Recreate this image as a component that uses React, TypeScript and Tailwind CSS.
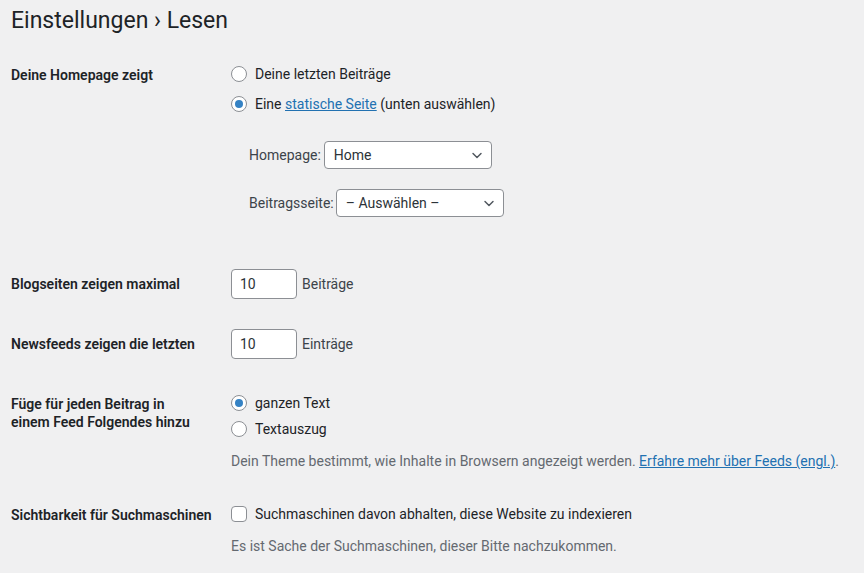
import React from 'react';

const font = { fontFamily: 'Roboto, "Noto Sans", sans-serif' };

function Radio({ checked }: { checked?: boolean }) {
  return (
    <span className="flex h-4 w-4 shrink-0 items-center justify-center rounded-full border border-[#8c8f94] bg-white">
      {checked && <span className="h-2 w-2 rounded-full bg-[#3582c4]" />}
    </span>
  );
}

function Chevron() {
  return (
    <svg width="16" height="16" viewBox="0 0 20 20" className="shrink-0">
      <path d="M5 8l5 5 5-5" fill="none" stroke="#50575e" strokeWidth="1.8" strokeLinecap="round" strokeLinejoin="round" />
    </svg>
  );
}

function Select({ value }: { value: string }) {
  return (
    <div className="flex h-[28px] w-[168px] items-center justify-between rounded-[4px] border border-[#8c8f94] bg-white pl-[9px] pr-[6px] text-[#2c3338]">
      <span className="pt-px">{value}</span>
      <Chevron />
    </div>
  );
}

function NumberInput({ value }: { value: string }) {
  return (
    <div className="flex h-[30px] w-[66px] items-center rounded-[4px] border border-[#8c8f94] bg-white px-[8px] pt-px text-[#2c3338]">
      {value}
    </div>
  );
}

function Row({ label, children, className }: { label: React.ReactNode; children: React.ReactNode; className?: string }) {
  return (
    <div className={`flex ${className ?? ''}`}>
      <div className="w-[220px] shrink-0 pt-[21px] pr-[10px] font-semibold leading-[18px] text-[#1d2327]">{label}</div>
      <div className="flex-1">{children}</div>
    </div>
  );
}

export default function App() {
  return (
    <div style={font} className="min-h-[573px] w-full bg-[#f0f0f1] pl-[11px] text-[14px] text-[#1d2327]">
      <h1 className="pt-[6px] text-[23px] font-normal leading-[30px] text-[#1d2327]">Einstellungen › Lesen</h1>

      <div className="mt-[9px]">
        <Row label="Deine Homepage zeigt" className="h-[209px]">
          <div className="flex flex-col pt-[20px]">
            <label className="flex h-[18px] items-center gap-2">
              <Radio />
              <span className="pt-px">Deine letzten Beiträge</span>
            </label>
            <label className="mt-[12px] flex h-[18px] items-center gap-2">
              <Radio checked />
              <span className="pt-px">
                Eine <a className="text-[#2271b1] underline">statische Seite</a> (unten auswählen)
              </span>
            </label>
            <div className="mt-[28px] flex items-center gap-[3px] pl-[18px] text-[#3c434a]">
              <span className="pt-px">Homepage:</span>
              <Select value="Home" />
            </div>
            <div className="mt-[20px] flex items-center gap-[2px] pl-[18px] text-[#3c434a]">
              <span className="pt-px">Beitragsseite:</span>
              <Select value="– Auswählen –" />
            </div>
          </div>
        </Row>

        <Row label="Blogseiten zeigen maximal" className="h-[60px]">
          <div className="flex items-center gap-[5px] pt-[15px]">
            <NumberInput value="10" />
            <span className="pt-px text-[#3c434a]">Beiträge</span>
          </div>
        </Row>

        <Row label="Newsfeeds zeigen die letzten" className="h-[60px]">
          <div className="flex items-center gap-[5px] pt-[15px]">
            <NumberInput value="10" />
            <span className="pt-px text-[#3c434a]">Einträge</span>
          </div>
        </Row>

        <Row
          label={
            <>
              Füge für jeden Beitrag in
              <br />
              einem Feed Folgendes hinzu
            </>
          }
          className="h-[111px]"
        >
          <div className="flex flex-col pt-[20px]">
            <label className="flex h-[18px] items-center gap-2">
              <Radio checked />
              <span className="pt-px">ganzen Text</span>
            </label>
            <label className="mt-[8px] flex h-[18px] items-center gap-2">
              <Radio />
              <span className="pt-px">Textauszug</span>
            </label>
            <p className="mt-[14px] whitespace-nowrap leading-[18px] text-[#646970]">
              Dein Theme bestimmt, wie Inhalte in Browsern angezeigt werden.{' '}
              <a className="text-[#2271b1] underline">Erfahre mehr über Feeds (engl.)</a>.
            </p>
          </div>
        </Row>

        <Row label={<span className="whitespace-nowrap">Sichtbarkeit für Suchmaschinen</span>}>
          <div className="flex flex-col pt-[20px]">
            <label className="flex h-[18px] items-center gap-2">
              <span className="h-4 w-4 shrink-0 rounded-[4px] border border-[#8c8f94] bg-white" />
              <span className="pt-px">Suchmaschinen davon abhalten, diese Website zu indexieren</span>
            </label>
            <p className="mt-[14px] leading-[18px] text-[#646970]">
              Es ist Sache der Suchmaschinen, dieser Bitte nachzukommen.
            </p>
          </div>
        </Row>
      </div>
    </div>
  );
}
